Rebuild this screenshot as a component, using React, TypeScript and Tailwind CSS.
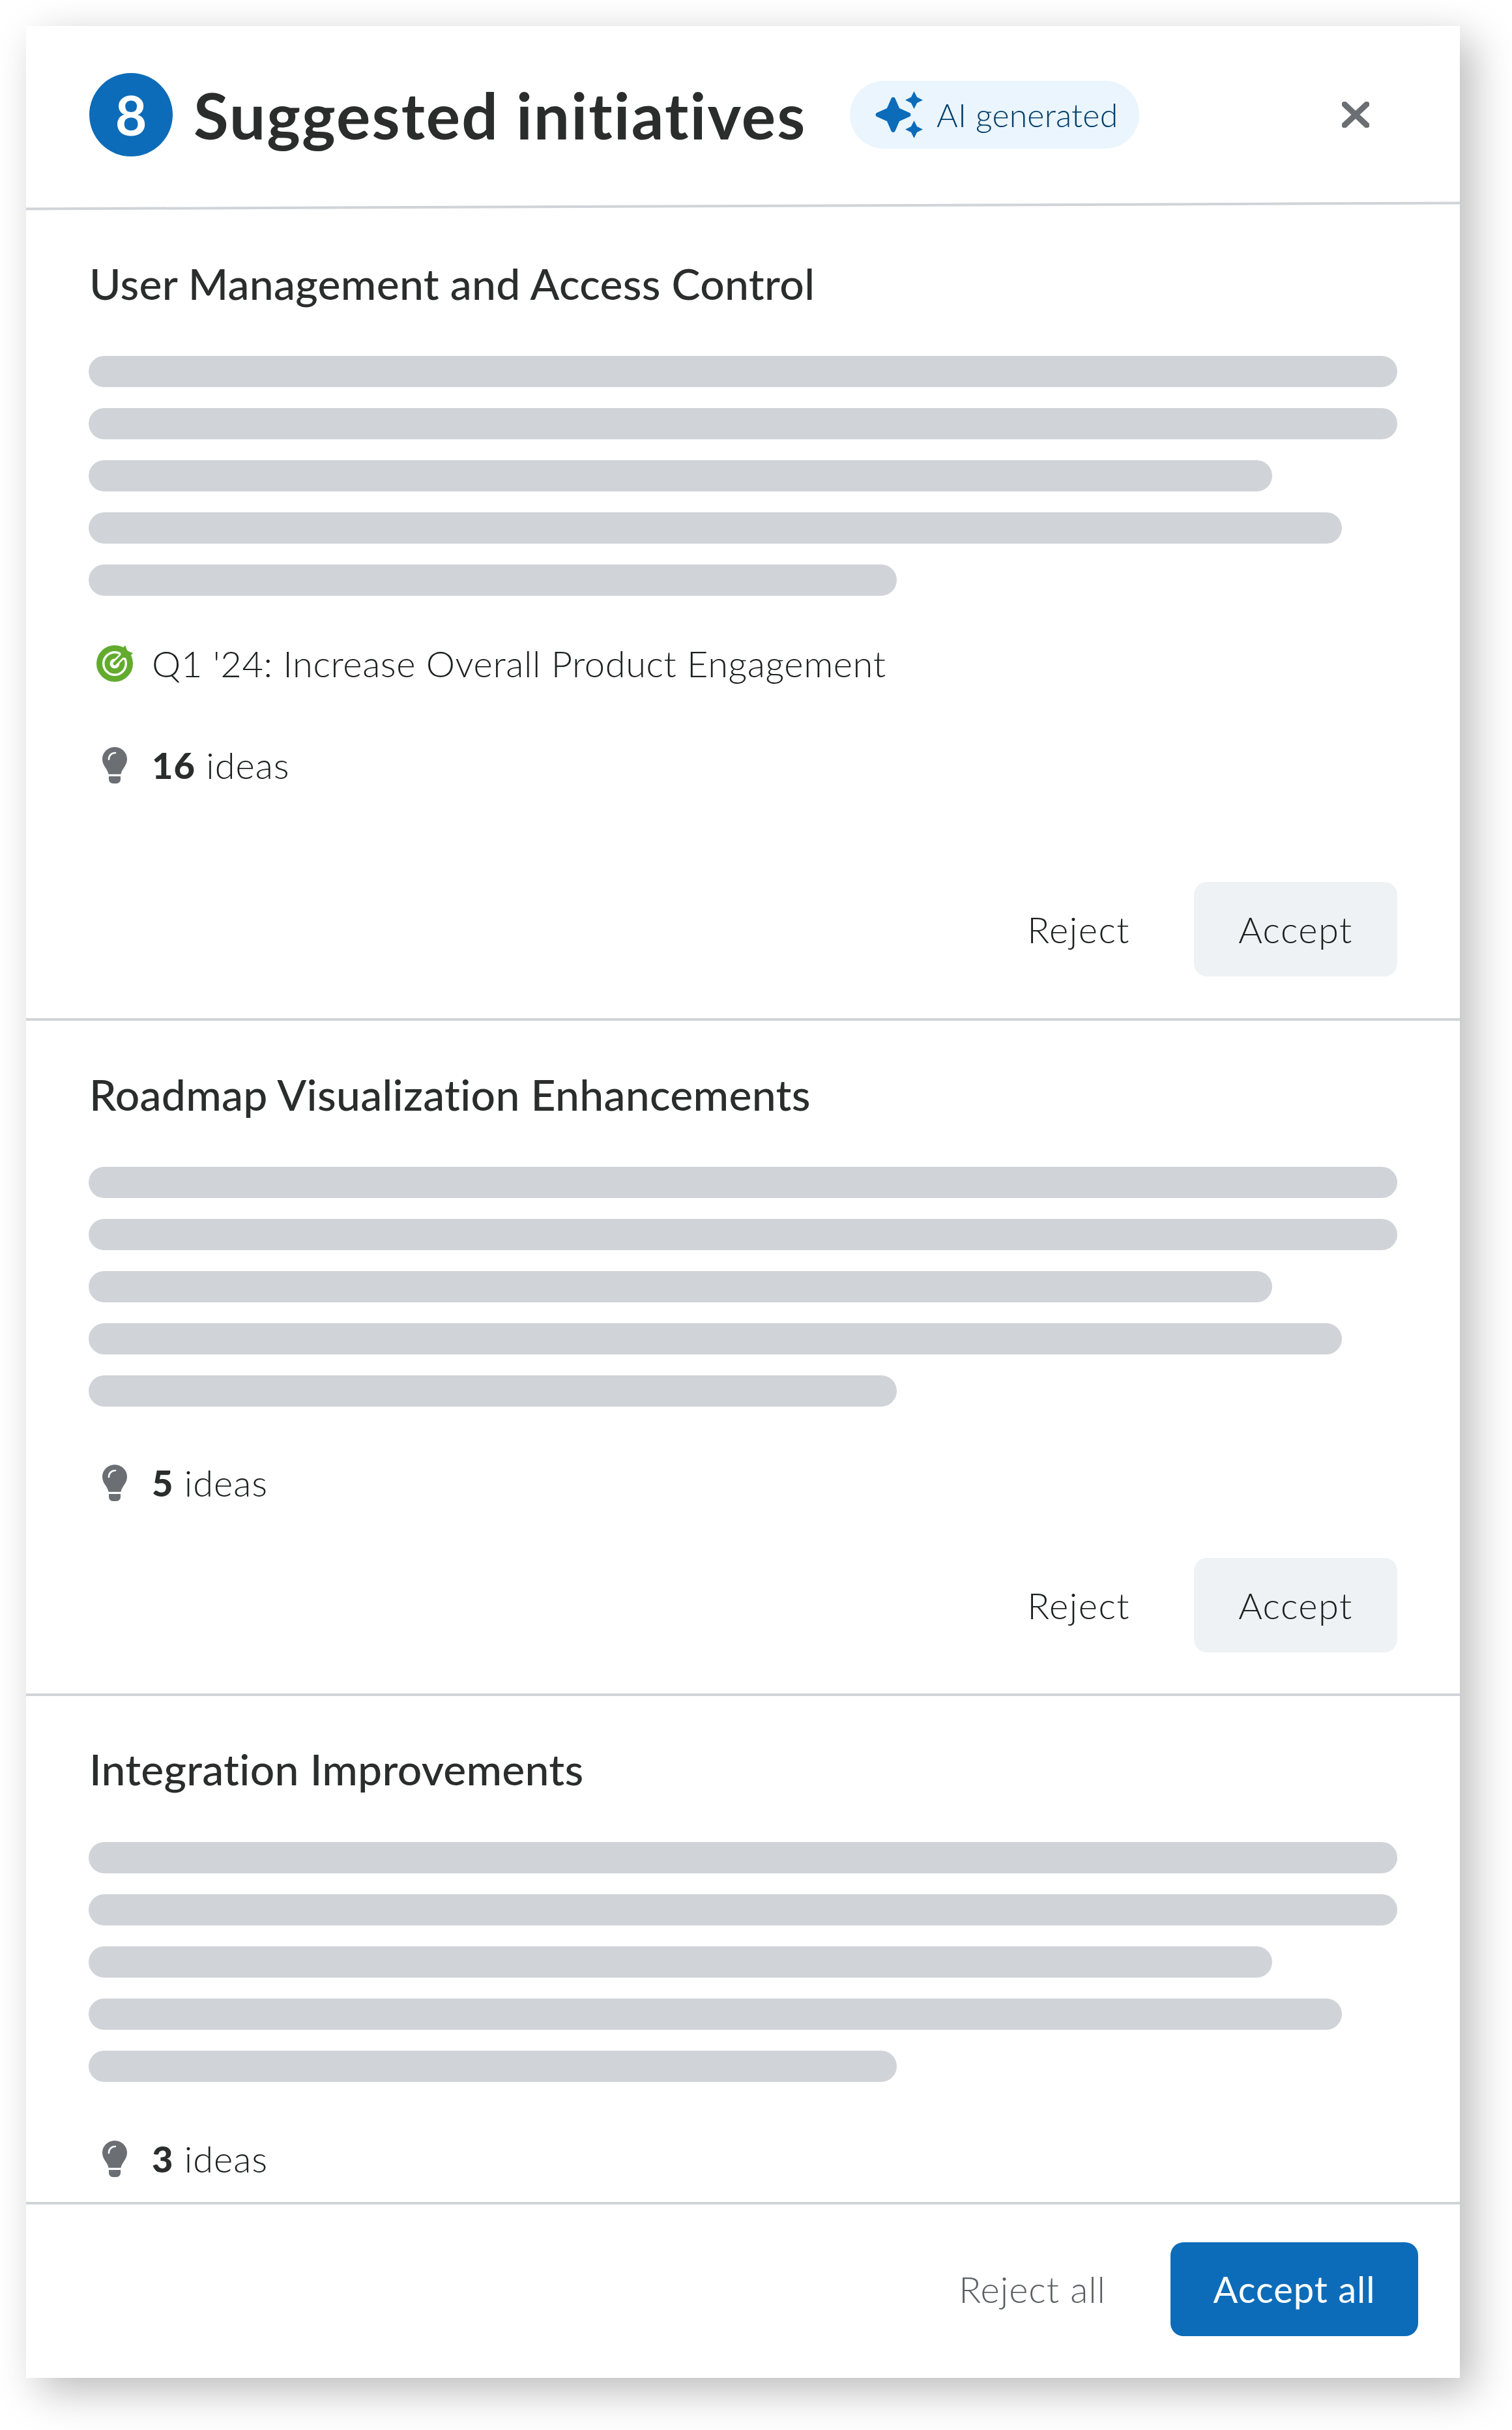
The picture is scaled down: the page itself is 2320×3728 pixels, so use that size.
const font = "font-['Lato','Noto_Sans',sans-serif]";

const barWidths = ["w-full", "w-full", "w-[1816px]", "w-[1923px]", "w-[1240px]"];

const Bars = () => (
  <div className="-ml-[2px] flex w-[2008px] flex-col gap-[32px]">
    {barWidths.map((w, i) => (
      <div key={i} className={`${w} h-[48px] rounded-full bg-[#d0d4d8]`} />
    ))}
  </div>
);

const Bulb = () => (
  <svg viewBox="0 0 38 56" className="h-[56px] w-[38px]">
    <path
      d="M19 0C8.5 0 0 8.3 0 18.6c0 4.6 1.7 8.6 4 12 2.2 3.2 4.4 6.2 5.6 11.2h18.8c1.2-5 3.4-8 5.6-11.2 2.3-3.4 4-7.400 4-12C38 8.300 29.500 0 19 0z"
      fill="#6b6f73"
    />
    <path d="M10 45h18v4.500c0 3.600-2.900 6.500-6.500 6.500h-5c-3.600 0-6.500-2.900-6.500-6.500z" fill="#6b6f73" />
    <path d="M10 19c0-6 4-10 10-10" fill="none" stroke="#fff" strokeWidth="2.600" strokeLinecap="round" />
  </svg>
);

const Target = () => (
  <svg viewBox="0 0 56 56" className="h-[56px] w-[56px]">
    <circle cx="28" cy="28" r="23.500" fill="none" stroke="#62ab2f" strokeWidth="9" />
    <circle cx="28" cy="28" r="11.500" fill="none" stroke="#62ab2f" strokeWidth="8" />
    <path d="M28 28 46 10" stroke="#fff" strokeWidth="10" />
    <path d="M28 28 43 13" stroke="#62ab2f" strokeWidth="5" strokeLinecap="round" />
    <path d="M37 8 44 0l3.500 8.500L56 12l-8 8-10.500-2z" fill="#62ab2f" />
  </svg>
);

const Sparkle = () => (
  <svg viewBox="0 0 73 72" className="h-[72px] w-[73px]">
    <path
      d="M27.500 9C29 9 30 10 30.500 11L37 26 52.500 33C55 34 55 38 52.500 39L37 46 30.500 61C30 62 29 63 27.500 63S25 62 24.500 61L18 46 2.500 39C0 38 0 34 2.500 33L18 26 24.500 11C25 10 26 9 27.500 9z"
      fill="#0c6cb9"
    />
    <path d="M59.500 0 64 9 73 13.500 64 18 59.500 27 55 18 46 13.500 55 9z" fill="#0c6cb9" />
    <path d="M59.500 45 64 54 73 58.500 64 63 59.500 72 55 63 46 58.500 55 54z" fill="#0c6cb9" />
  </svg>
);

const Ideas = ({ count, className }: { count: number; className: string }) => (
  <div className={`-ml-[2px] flex h-[60px] items-center ${className}`}>
    <div className="w-[97px] pr-[38px] pl-[21px]">
      <Bulb />
    </div>
    <span className="text-[56px] leading-[60px] font-light tracking-[1px] text-[#1e2020]">
      <b className="font-black text-[#2b2d2d]">{count}</b> ideas
    </span>
  </div>
);

const Actions = ({ className }: { className: string }) => (
  <div className={`flex items-center justify-end ${className}`}>
    <button className="mr-[98px] text-[56px] leading-[60px] font-light tracking-[1.500px] text-[#1e2020]">Reject</button>
    <button className="flex h-[145px] w-[312px] items-center justify-center rounded-[20px] bg-[#eff2f5] text-[56px] font-light tracking-[1.500px] text-[#1e2020]">
      Accept
    </button>
  </div>
);

const Title = ({ children, className }: { children: string; className: string }) => (
  <h2 className={`-ml-[1px] h-[80px] text-[66px] leading-[80px] font-medium tracking-[0.3px] text-[#2b2d2d] ${className}`}>{children}</h2>
);

export default function App() {
  return (
    <div className={`h-[3728px] w-[2320px] overflow-hidden bg-white pt-[40px] pl-[40px] ${font}`}>
      <div className="flex h-[3608px] w-[2200px] flex-col overflow-hidden bg-white shadow-[20px_20px_60px_rgba(0,0,0,0.27)]">
        <header className="flex h-[274px] shrink-0 items-start pt-[72px] pl-[97px]">
          <div className="flex h-[128px] w-[128px] shrink-0 items-center justify-center rounded-full bg-[#0c6cb9] text-[84px] font-bold text-white">
            8
          </div>
          <h1 className="ml-[32px] w-[939px] shrink-0 text-[98px] leading-[128px] font-bold tracking-[2.100px] whitespace-nowrap text-[#2b2d2d]">
            Suggested initiatives
          </h1>
          <div className="mt-[12px] ml-[68px] flex h-[104px] w-[444px] shrink-0 items-center rounded-full bg-[#eaf5fd] pl-[39px]">
            <Sparkle />
            <span className="ml-[21px] text-[50px] font-light tracking-[0.2px] text-[#023f6b]">AI generated</span>
          </div>
          <svg viewBox="0 0 42 40" className="mt-[44px] ml-[311px] h-[40px] w-[42px] shrink-0">
            <path d="M4 4 38 36M38 4 4 36" stroke="#6b6f73" strokeWidth="9" strokeLinecap="round" />
          </svg>
        </header>
        <div className="h-[4px] w-[2204px] shrink-0 -rotate-[0.234deg] bg-[#d0d4d8]" />

        <section className="flex h-[1244px] shrink-0 flex-col pr-[96px] pl-[98px]">
          <Title className="mt-[77px] mb-[71px]">User Management and Access Control</Title>
          <Bars />
          <div className="mt-[74px] flex h-[60px] items-center">
            <div className="mr-[29px] ml-[10px]">
              <Target />
            </div>
            <span className="text-[56px] leading-[60px] font-light tracking-[0.6px] text-[#1e2020]">Q1 '24: Increase Overall Product Engagement</span>
          </div>
          <Ideas count={16} className="mt-[96px]" />
          <Actions className="mt-[149px]" />
        </section>
        <div className="h-[4px] shrink-0 bg-[#d0d4d8]" />

        <section className="flex h-[1032px] shrink-0 flex-col pr-[96px] pl-[98px]">
          <Title className="mt-[73px] mb-[71px]">Roadmap Visualization Enhancements</Title>
          <Bars />
          <Ideas count={5} className="mt-[87px]" />
          <Actions className="mt-[85px]" />
        </section>
        <div className="h-[4px] shrink-0 bg-[#d0d4d8]" />

        <section className="flex h-[776px] shrink-0 flex-col pr-[96px] pl-[98px]">
          <Title className="mt-[72px] mb-[72px]">Integration Improvements</Title>
          <Bars />
          <Ideas count={3} className="mt-[88px]" />
        </section>
        <div className="h-[4px] shrink-0 bg-[#d0d4d8]" />

        <footer className="flex flex-1 items-start justify-end pt-[58px] pr-[64px]">
          <button className="mt-[42px] mr-[99px] text-[56px] leading-[60px] font-light tracking-[1px] text-[#5c6064]">Reject all</button>
          <button className="flex h-[144px] w-[380px] items-center justify-center rounded-[20px] bg-[#0c6cb9] text-[56px] tracking-[1px] text-white">
            Accept all
          </button>
        </footer>
      </div>
    </div>
  );
}
